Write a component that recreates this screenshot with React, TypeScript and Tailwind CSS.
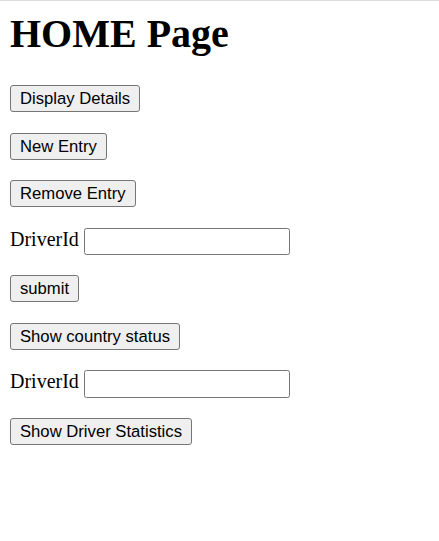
import React from "react";

const Btn: React.FC<{ label: string }> = ({ label }) => (
  <button
    type="button"
    className="h-[27px] self-start flex items-center px-[9px] border border-[#767676] rounded-[3px] bg-[#efefef] text-black text-[16.67px] font-['Liberation_Sans',Arial,sans-serif]"
  >
    {label}
  </button>
);

const DriverField: React.FC = () => (
  <div className="h-[27.5px] flex items-start gap-[5.5px]">
    <label className="text-[20px] leading-[23px] text-black">DriverId</label>
    <input
      type="text"
      className="w-[206px] h-[27.5px] border border-[#767676] rounded-[2.5px] bg-white outline-none"
    />
  </div>
);

const App: React.FC = () => {
  return (
    <div className="min-h-[541px] bg-white border-t border-[#dcdcdc] pt-[10px] px-[10px] font-['Liberation_Serif','Times_New_Roman',serif] text-black">
      <h1 className="text-[40px] leading-[46px] font-bold">HOME Page</h1>

      <div className="mt-[28px] flex flex-col gap-5">
        <div className="h-[27.5px] flex"><Btn label="Display Details" /></div>
        <div className="h-[27.5px] flex"><Btn label="New Entry" /></div>
        <div className="h-[27.5px] flex"><Btn label="Remove Entry" /></div>
        <DriverField />
        <div className="h-[27.5px] flex"><Btn label="submit" /></div>
        <div className="h-[27.5px] flex"><Btn label="Show country status" /></div>
        <DriverField />
        <div className="h-[27.5px] flex"><Btn label="Show Driver Statistics" /></div>
      </div>
    </div>
  );
};

export default App;
